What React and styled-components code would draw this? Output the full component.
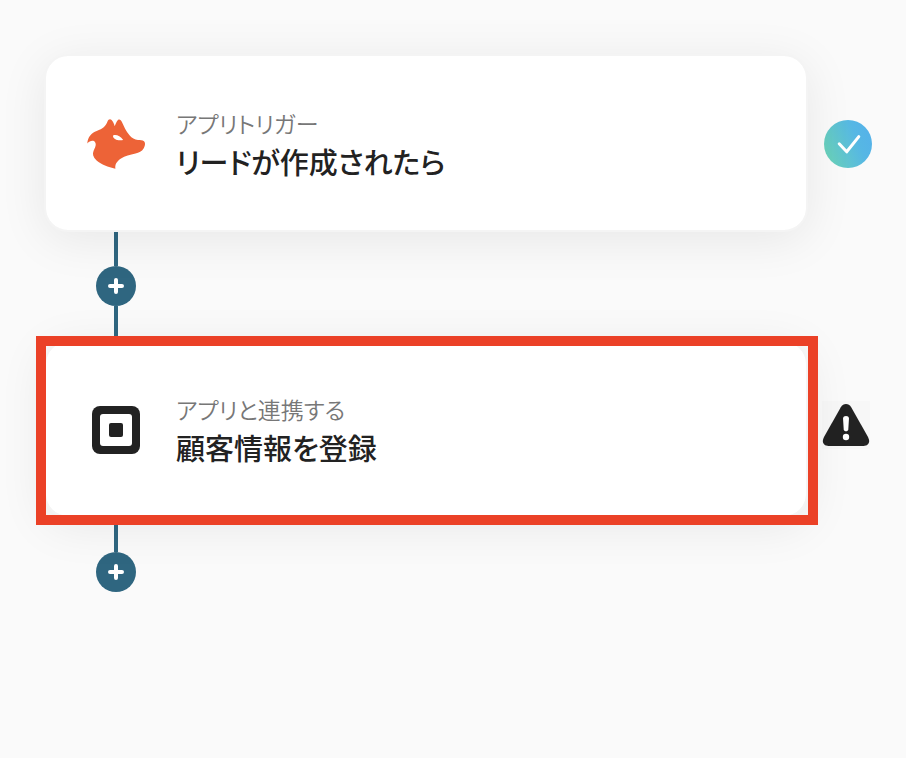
import React from "react";
import styled, { createGlobalStyle } from "styled-components";

const GlobalStyle = createGlobalStyle`
  *, *::before, *::after { box-sizing: border-box; }
  body {
    margin: 0;
    background: #fafafa;
    color: #222222;
    font-family: "Noto Sans CJK JP", "Noto Sans", sans-serif;
    font-feature-settings: "palt";
  }
`;

const Flow = styled.main`
  padding: 54px 34px 54px 44px;
`;

const Steps = styled.ol`
  margin: 0;
  padding: 0;
  list-style: none;
`;

const Row = styled.div`
  display: flex;
  align-items: center;
  gap: 14px;
`;

const Card = styled.article`
  position: relative;
  z-index: ${(p) => (p.$marked ? 1 : 0)};
  flex: 1;
  min-width: 0;
  height: 178px;
  display: flex;
  align-items: center;
  gap: 30px;
  padding: 0 40px;
  border: 2px solid #f4f4f4;
  border-radius: 24px;
  background: #ffffff;
  background-clip: padding-box;
  box-shadow: 0 8px 48px rgba(0, 0, 0, 0.08);
`;

const Highlight = styled.div`
  position: absolute;
  inset: -6px -12px -9px -10px;
  border: 10px solid #eb4127;
  pointer-events: none;
`;

const AppIcon = styled.svg`
  flex: none;
  width: 60px;
  height: 60px;
`;

const Labels = styled.div`
  min-width: 0;
`;

const Kind = styled.p`
  margin: 0;
  font-size: 23px;
  line-height: 36px;
  font-weight: 350;
  color: #777777;
`;

const Title = styled.h2`
  margin: 0;
  font-size: 29px;
  line-height: 40px;
  font-weight: 500;
`;

const Status = styled.div`
  flex: none;
  display: flex;
  justify-content: ${(p) => (p.$end ? "flex-end" : "flex-start")};
  width: 50px;

  svg { display: block; }
`;

const Connector = styled.div`
  display: flex;
  flex-direction: column;
  align-items: center;
  width: 144px;
`;

const Line = styled.span`
  width: 4px;
  height: 34px;
  background: #2f6680;
`;

const AddButton = styled.button`
  display: grid;
  place-items: center;
  width: 40px;
  height: 40px;
  padding: 0;
  border: 0;
  border-radius: 50%;
  background: #2f6680;
  cursor: pointer;
`;

function FoxIcon() {
  return (
    <AppIcon viewBox="0 0 60 60" aria-hidden="true">
      <path
        fill="#ed6337"
        fillRule="evenodd"
        d="M1.3 30.5C1.8 23.5 5.6 20 10.7 18C17 15.5 19.5 13.5 21.5 8.5C22.4 6.2 24.2 5.6 25.6 7C27.4 8.8 28 11 28.7 13.2C29.8 10.6 30.8 8 32 7C33.5 5.8 35 7 35.9 9C38 13.5 39.8 18 43.5 22.2C46 25 48.5 26.8 52 26.9C54.3 27 56.5 26.9 58 28.3C59.7 29.9 59.1 33.2 57.6 35.6C55.8 38.6 53 39.6 49.5 40.4C44 41.6 39 42.8 35 45.6C30.7 48.6 28.8 51.5 29.4 55.7C22 53.8 15.5 51.8 10.6 47.5C7 44.3 6.2 41 7.6 37.8C9 34.7 10.7 31.8 9.1 29.2C7.5 27 3.8 27.6 1.3 30.5ZM27 23C27.1 26.2 32.2 28.3 37.2 26.9C34.8 23.8 31.8 22.1 29.2 22.1C27.7 22.1 27 22.3 27 23Z"
      />
    </AppIcon>
  );
}

function SquareIcon() {
  return (
    <AppIcon viewBox="0 0 60 60" aria-hidden="true">
      <rect x="6" y="7" width="48" height="48" rx="8" fill="#222222" />
      <rect x="14" y="15" width="32" height="32" rx="3" fill="#ffffff" />
      <rect x="23" y="24" width="14" height="14" rx="2" fill="#222222" />
    </AppIcon>
  );
}

function DoneIcon() {
  return (
    <svg width="48" height="50" viewBox="0 0 48 50" role="img" aria-label="完了">
      <defs>
        <linearGradient id="done" x1="0" y1="0.7" x2="1" y2="0.3">
          <stop offset="0" stopColor="#6ad2b9" />
          <stop offset="0.7" stopColor="#56b7e4" />
          <stop offset="1" stopColor="#55b2e9" />
        </linearGradient>
      </defs>
      <circle cx="24" cy="26" r="24" fill="url(#done)" />
      <path
        d="M15.2 25.8L22.7 33.8L34.8 18.6"
        fill="none"
        stroke="#ffffff"
        strokeWidth="3"
        strokeLinecap="round"
        strokeLinejoin="round"
      />
    </svg>
  );
}

function WarningIcon() {
  return (
    <svg width="48" height="56" viewBox="0 0 48 56" role="img" aria-label="警告">
      <rect width="48" height="48" fill="#f7f7f7" />
      <path
        fill="#222222"
        d="M18.8 6.2C21.2 2 26.8 2 29.2 6.2L46 36C48.7 41 46.5 45 41.5 45H6.5C1.5 45 -0.7 41 2 36Z"
      />
      <path
        fill="#ffffff"
        d="M21 17.5C21 14.2 27 14.2 27 17.5L26.3 28.3C26.1 31 21.9 31 21.7 28.3Z"
      />
      <circle cx="24" cy="36" r="3.2" fill="#ffffff" />
    </svg>
  );
}

function Add() {
  return (
    <AddButton type="button" aria-label="ステップを追加">
      <svg width="16" height="16" viewBox="0 0 16 16" aria-hidden="true">
        <path d="M8 2V14M2 8H14" stroke="#ffffff" strokeWidth="4" strokeLinecap="round" />
      </svg>
    </AddButton>
  );
}

function Step({ icon, kind, title, status, statusEnd, marked, last }) {
  return (
    <li>
      <Row>
        <Card $marked={marked}>
          {icon}
          <Labels>
            <Kind>{kind}</Kind>
            <Title>{title}</Title>
          </Labels>
          {marked && <Highlight />}
        </Card>
        <Status $end={statusEnd}>{status}</Status>
      </Row>
      <Connector>
        <Line />
        <Add />
        {!last && <Line />}
      </Connector>
    </li>
  );
}

export default function App() {
  return (
    <>
      <GlobalStyle />
      <Flow>
        <Steps>
          <Step
            icon={<FoxIcon />}
            kind="アプリトリガー"
            title="リードが作成されたら"
            status={<DoneIcon />}
            statusEnd
          />
          <Step
            icon={<SquareIcon />}
            kind="アプリと連携する"
            title="顧客情報を登録"
            status={<WarningIcon />}
            marked
            last
          />
        </Steps>
      </Flow>
    </>
  );
}
